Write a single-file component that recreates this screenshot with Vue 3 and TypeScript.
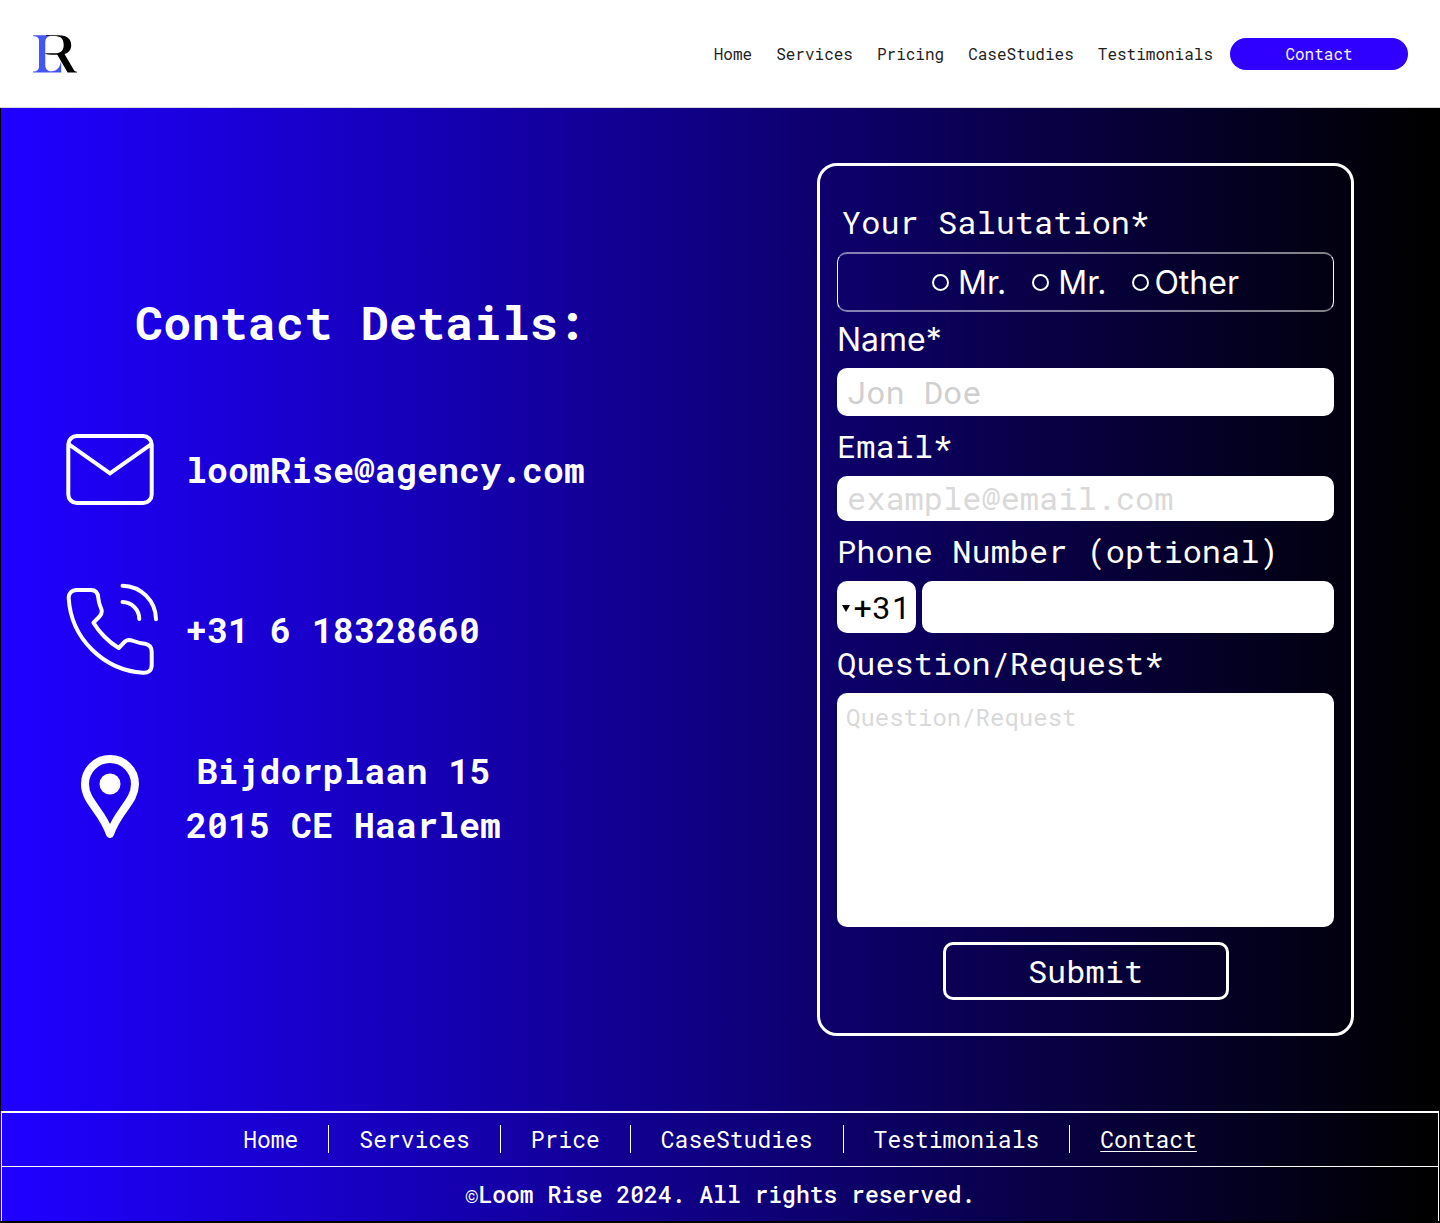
<script setup lang="ts">
import { ref } from 'vue'

const headerLinks: string[] = ['Home', 'Services', 'Pricing', 'CaseStudies', 'Testimonials']
const footerLinks: string[] = ['Home', 'Services', 'Price', 'CaseStudies', 'Testimonials', 'Contact']
const salutations = [
  { value: 'mr', label: 'Mr.' },
  { value: 'mrs', label: 'Mr.' },
  { value: 'other', label: 'Other' },
]

const salutation = ref<string>('')
const name = ref<string>('')
const email = ref<string>('')
const prefix = ref<string>('+31')
const phone = ref<string>('')
const question = ref<string>('')
</script>

<template>
  <div class="page">
    <header class="header">
      <a class="logo" href="#" aria-label="Loom Rise">
        <svg width="46" height="40" viewBox="0 0 46 40" aria-hidden="true">
          <path
            d="M1 1.200H18V2C15 2.500 13.300 4.500 13.300 8V31C13.300 35 15.500 37.300 19.500 37.300C25 37.300 29 32.500 29.200 25V38.500H1V37.600C5 37.300 7 36 7 32V7C7 3.500 5 2.300 1 2Z"
            fill="#4356f0"
          />
          <path
            d="M14 1.200H27C35 1.200 39.200 5 39.200 11C39.200 16 36.500 19 32.500 20L41 34.500C42.200 36.800 43 37.500 45 37.700V38.500H35.600L25.300 20.800C21 20.700 17 20.500 13.500 19.900V19.300H23C29 19.300 31.700 16.500 31.700 11C31.700 5 29 2.200 23 2H14Z"
            fill="#000"
          />
        </svg>
      </a>
      <nav class="header-nav" aria-label="Main">
        <a v-for="link in headerLinks" :key="link" href="#">{{ link }}</a>
      </nav>
      <a class="header-contact" href="#">Contact</a>
    </header>

    <main class="main">
      <section class="details">
        <h1>Contact Details:</h1>
        <ul>
          <li>
            <span class="icon">
              <svg width="88" height="71" viewBox="0 0 88 71" fill="none" stroke="#fff" stroke-width="4" aria-hidden="true">
                <rect x="2.300" y="2" width="83.400" height="67" rx="8.500" />
                <path d="M3 10.300L44 39.300L85 10.300" />
              </svg>
            </span>
            <span>loomRise@agency.com</span>
          </li>
          <li>
            <span class="icon">
              <svg width="92" height="92" viewBox="0 0 92 92" fill="none" stroke="#fff" stroke-width="4" stroke-linecap="round" stroke-linejoin="round" aria-hidden="true">
                <path
                  d="M10.700 7H25C30 7 32 10 32.300 15C32.600 20 34 23 35.500 26.500C36.200 29.500 35.500 31.500 33.500 33.500L27.500 39.700C33 49 43 59.500 52.700 65L57.500 60C59.500 57.500 62.500 56.500 66 57.500C70 59 74 60.300 79 60.800C83 61.500 85.700 64.500 85.700 69V82C85.700 87.500 82.500 90.200 77 89.800C38 87 5 56 2.700 15C2.500 10.500 5.500 7 10.700 7Z"
                />
                <path d="M56.500 2.700A34 34 0 0 1 90 36.300M56.500 19A17 17 0 0 1 73.300 36" />
              </svg>
            </span>
            <span>+31 6 18328660</span>
          </li>
          <li>
            <span class="icon">
              <svg width="88" height="84" viewBox="0 0 88 84" aria-hidden="true">
                <path
                  d="M19 29A25 25 0 0 1 69 29C69 47 52 55 44 79C36 55 19 47 19 29Z"
                  fill="none"
                  stroke="#fff"
                  stroke-width="8"
                  stroke-linejoin="round"
                />
                <circle cx="44" cy="29" r="10.500" fill="#fff" />
              </svg>
            </span>
            <address>Bijdorplaan 15<br />2015 CE Haarlem</address>
          </li>
        </ul>
      </section>

      <form class="card" @submit.prevent>
        <fieldset>
          <legend>Your Salutation*</legend>
          <div class="options">
            <label v-for="s in salutations" :key="s.value" :class="['option', s.value]">
              <input v-model="salutation" type="radio" name="salutation" :value="s.value" />
              <span>{{ s.label }}</span>
            </label>
          </div>
        </fieldset>

        <label class="label sans" for="name">Name*</label>
        <input id="name" v-model="name" class="field name" type="text" placeholder="Jon Doe" />

        <label class="label" for="email">Email*</label>
        <input id="email" v-model="email" class="field email" type="email" placeholder="example@email.com" />

        <label class="label" for="phone">Phone Number (optional)</label>
        <div class="phone-row">
          <div class="prefix">
            <select v-model="prefix" class="field" aria-label="Country code">
              <option>+31</option>
              <option>+32</option>
              <option>+49</option>
            </select>
            <svg width="8" height="7" viewBox="0 0 8 7" aria-hidden="true"><path d="M0 0H8L4 7Z" /></svg>
          </div>
          <input id="phone" v-model="phone" class="field" type="tel" />
        </div>

        <label class="label" for="question">Question/Request*</label>
        <textarea id="question" v-model="question" class="field" placeholder="Question/Request"></textarea>

        <button type="submit">Submit</button>
      </form>
    </main>

    <footer class="footer">
      <nav aria-label="Footer">
        <ul>
          <li v-for="link in footerLinks" :key="link">
            <a href="#" :class="{ current: link === 'Contact' }">{{ link }}</a>
          </li>
        </ul>
      </nav>
      <p><span>©</span>Loom Rise 2024. All rights reserved.</p>
    </footer>
  </div>
</template>

<style>
body {
  margin: 0;
  background: #000;
}
</style>

<style scoped>
.page {
  --mono: 'Roboto Mono', 'DejaVu Sans Mono', monospace;
  --sans: Inter, sans-serif;
  font-family: var(--mono);
  color: #fff;
  background: linear-gradient(90deg, #1f00ff 1%, #000 99%);
}

.page * {
  box-sizing: border-box;
}

a {
  color: inherit;
  text-decoration: none;
}

ul {
  margin: 0;
  padding: 0;
  list-style: none;
}

.header {
  display: flex;
  align-items: center;
  min-height: 108px;
  padding: 0 32px;
  border-bottom: 1px solid #d9d9d9;
  background: #fff;
  color: #1e1e1e;
  font-size: 16px;
}

.logo {
  display: flex;
}

.header-nav {
  display: flex;
  flex-wrap: wrap;
  gap: 24px;
  margin-left: auto;
}

.header-contact {
  width: 178px;
  margin-left: 17px;
  border-radius: 16px;
  background: #2f00ff;
  color: #f5f5f5;
  line-height: 32px;
  text-align: center;
}

.main {
  display: flex;
  flex-wrap: wrap;
  justify-content: space-between;
  align-items: flex-start;
  padding: 55px 86px 75px 65px;
  border-left: 1px solid #000;
}

.details {
  padding-top: 131px;
  font-weight: 700;
}

.details h1 {
  margin: 0 0 73px;
  padding-left: 69px;
  font-size: 47px;
  line-height: 56px;
}

.details ul {
  display: flex;
  flex-direction: column;
  gap: 68px;
  font-size: 35px;
  line-height: 54px;
}

.details li {
  display: flex;
  align-items: center;
  gap: 28px;
  min-height: 92px;
}

.icon {
  display: flex;
  width: 92px;
}

.icon svg {
  flex: none;
}

address {
  font-style: normal;
  text-align: center;
}

.card {
  display: flex;
  flex-direction: column;
  width: 537px;
  max-width: 100%;
  padding: 26px 17px 33px;
  border: 3px solid #fff;
  border-radius: 20px;
  font-size: 32px;
}

fieldset {
  min-width: 0;
  margin: 0;
  padding: 0;
  border: 0;
}

legend {
  padding: 0 0 0 5px;
  line-height: 60px;
}

.options {
  display: flex;
  justify-content: center;
  align-items: center;
  gap: 26px;
  height: 60px;
  border: solid;
  border-width: 2px 1px;
  border-color: rgba(255, 255, 255, 0.5) #fff;
  border-radius: 10px;
  font-family: var(--sans);
}

.option {
  display: flex;
  align-items: center;
  gap: 9px;
}

.option.other {
  gap: 5px;
}

.option input {
  appearance: none;
  width: 17px;
  height: 17px;
  margin: 0;
  border: 2px solid #fff;
  border-radius: 50%;
}

.option input:checked {
  background: #fff;
}

.label {
  line-height: 60px;
}

.label.sans {
  font-family: var(--sans);
  line-height: 56px;
}

.field {
  width: 100%;
  height: 52px;
  margin: 0;
  padding: 0 10px 2px;
  border: 0;
  border-radius: 10px;
  background: #fff;
  color: #000;
  font: inherit;
}

.field::placeholder {
  color: #d9d9d9;
  opacity: 1;
}

.name {
  height: 48px;
}

.name::placeholder {
  color: #cfcfcf;
}

.email {
  height: 45px;
}

.phone-row {
  display: flex;
  gap: 6px;
}

.prefix {
  position: relative;
  flex: none;
  width: 79px;
}

.prefix select {
  appearance: none;
  padding: 0 0 2px 16px;
}

.prefix svg {
  position: absolute;
  top: 24px;
  left: 5px;
  pointer-events: none;
}

textarea.field {
  height: 234px;
  padding: 8px 9px;
  font-size: 24px;
  line-height: 32px;
  resize: none;
}

button {
  align-self: center;
  width: 286px;
  height: 58px;
  margin-top: 15px;
  padding: 0 0 2px;
  border: 3px solid #fff;
  border-radius: 10px;
  background: none;
  color: #fff;
  font: inherit;
}

.footer {
  margin: 0 1px;
  border: 1px solid #fff;
  border-width: 2px 1px 0;
  font-size: 23px;
}

.footer nav {
  padding: 12px 0 13px;
  border-bottom: 1px solid #fff;
}

.footer ul {
  display: flex;
  flex-wrap: wrap;
  justify-content: center;
}

.footer li {
  padding: 0 30px;
  line-height: 28px;
}

.footer li + li {
  border-left: 1px solid #fff;
}

.current {
  text-decoration: underline;
  text-decoration-thickness: 1px;
  text-underline-offset: 3px;
}

.footer p {
  margin: 0;
  line-height: 54px;
  text-align: center;
  font-weight: 500;
}

.footer p span {
  font-weight: 400;
}

@media (max-width: 1240px) {
  .main {
    justify-content: center;
    gap: 48px;
    padding: 48px 24px;
  }

  .details {
    padding-top: 0;
  }
}
</style>
